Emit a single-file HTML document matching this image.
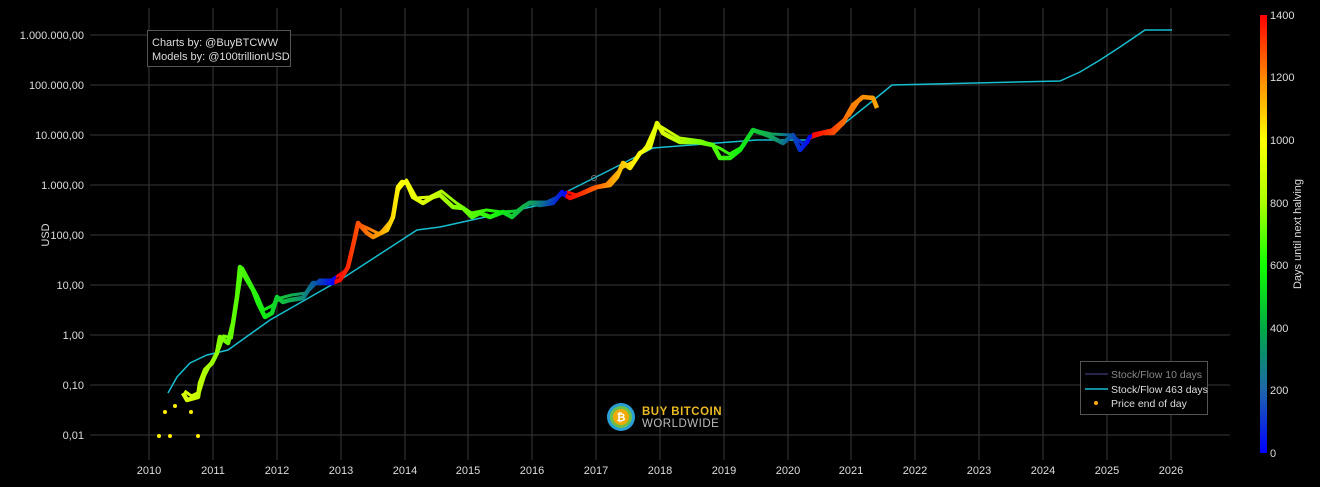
<!DOCTYPE html>
<html><head><meta charset="utf-8"><style>
html,body{margin:0;padding:0;background:#000;}
svg{display:block;font-family:"Liberation Sans",sans-serif;}
</style></head><body>
<svg width="1320" height="487" viewBox="0 0 1320 487" xmlns="http://www.w3.org/2000/svg">
<defs>
<linearGradient id="pg" gradientUnits="userSpaceOnUse" x1="0" y1="0" x2="1320" y2="0">
<stop offset="0.1205" stop-color="#ffff00"/>
<stop offset="0.147" stop-color="#ccff00"/>
<stop offset="0.1735" stop-color="#66ff00"/>
<stop offset="0.2" stop-color="#11ee11"/>
<stop offset="0.2265" stop-color="#119966"/>
<stop offset="0.253" stop-color="#0000ff"/>
<stop offset="0.2538" stop-color="#ff0000"/>
<stop offset="0.2788" stop-color="#ff7700"/>
<stop offset="0.303" stop-color="#ffff00"/>
<stop offset="0.328" stop-color="#ccff00"/>
<stop offset="0.353" stop-color="#66ff00"/>
<stop offset="0.378" stop-color="#11ee11"/>
<stop offset="0.403" stop-color="#119966"/>
<stop offset="0.428" stop-color="#0000ff"/>
<stop offset="0.4288" stop-color="#ff0000"/>
<stop offset="0.455" stop-color="#ff7700"/>
<stop offset="0.482" stop-color="#ffff00"/>
<stop offset="0.5076" stop-color="#ccff00"/>
<stop offset="0.534" stop-color="#66ff00"/>
<stop offset="0.5606" stop-color="#11ee11"/>
<stop offset="0.587" stop-color="#119966"/>
<stop offset="0.6136" stop-color="#0000ff"/>
<stop offset="0.6144" stop-color="#ff0000"/>
<stop offset="0.6417" stop-color="#ff7700"/>
<stop offset="0.668" stop-color="#ffaa00"/>
</linearGradient>
<linearGradient id="cb" x1="0" y1="1" x2="0" y2="0">
<stop offset="0" stop-color="#0000ff"/>
<stop offset="0.143" stop-color="#1e66aa"/>
<stop offset="0.286" stop-color="#00aa44"/>
<stop offset="0.43" stop-color="#11ff00"/>
<stop offset="0.57" stop-color="#aaff00"/>
<stop offset="0.714" stop-color="#ffff00"/>
<stop offset="0.857" stop-color="#ff8800"/>
<stop offset="1" stop-color="#ff0000"/>
</linearGradient>
</defs>
<g stroke="#383838" stroke-width="1">
<line x1="149" y1="8" x2="149" y2="460"/><line x1="213" y1="8" x2="213" y2="460"/><line x1="277" y1="8" x2="277" y2="460"/><line x1="341" y1="8" x2="341" y2="460"/><line x1="405" y1="8" x2="405" y2="460"/><line x1="468" y1="8" x2="468" y2="460"/><line x1="532" y1="8" x2="532" y2="460"/><line x1="596" y1="8" x2="596" y2="460"/><line x1="660" y1="8" x2="660" y2="460"/><line x1="724" y1="8" x2="724" y2="460"/><line x1="788" y1="8" x2="788" y2="460"/><line x1="851" y1="8" x2="851" y2="460"/><line x1="915" y1="8" x2="915" y2="460"/><line x1="979" y1="8" x2="979" y2="460"/><line x1="1043" y1="8" x2="1043" y2="460"/><line x1="1107" y1="8" x2="1107" y2="460"/><line x1="1171" y1="8" x2="1171" y2="460"/>
<line x1="90" y1="35" x2="1230" y2="35"/><line x1="90" y1="85" x2="1230" y2="85"/><line x1="90" y1="135" x2="1230" y2="135"/><line x1="90" y1="185" x2="1230" y2="185"/><line x1="90" y1="235" x2="1230" y2="235"/><line x1="90" y1="285" x2="1230" y2="285"/><line x1="90" y1="335" x2="1230" y2="335"/><line x1="90" y1="385" x2="1230" y2="385"/><line x1="90" y1="435" x2="1230" y2="435"/>
</g>
<g fill="#ddd" font-size="11" text-anchor="end">
<text x="84" y="39">1.000.000,00</text><text x="84" y="89">100.000,00</text><text x="84" y="139">10.000,00</text><text x="84" y="189">1.000,00</text><text x="84" y="239">100,00</text><text x="84" y="289">10,00</text><text x="84" y="339">1,00</text><text x="84" y="389">0,10</text><text x="84" y="439">0,01</text>
</g>
<g fill="#ddd" font-size="11" text-anchor="middle">
<text x="149" y="474">2010</text><text x="213" y="474">2011</text><text x="277" y="474">2012</text><text x="341" y="474">2013</text><text x="405" y="474">2014</text><text x="468" y="474">2015</text><text x="532" y="474">2016</text><text x="596" y="474">2017</text><text x="660" y="474">2018</text><text x="724" y="474">2019</text><text x="788" y="474">2020</text><text x="851" y="474">2021</text><text x="915" y="474">2022</text><text x="979" y="474">2023</text><text x="1043" y="474">2024</text><text x="1107" y="474">2025</text><text x="1171" y="474">2026</text>
</g>
<text transform="translate(49,235) rotate(-90)" fill="#ddd" font-size="11" text-anchor="middle">USD</text>
<polyline fill="none" stroke="#17becf" stroke-width="1.5" points="168,393 177,377 190,363 207,355 228,350 263,325 270,320 340,280 417,230 440,227 540,205 590,180 610,170 653,148 717,143 757,140 807,140 840,127 870,103 892,85 1060,81 1080,72 1100,60 1120,47 1145,30 1172,30"/>
<polyline fill="none" stroke="url(#pg)" stroke-width="4.5" stroke-linejoin="round" points="183,393 187,400 198,397 200,383 205,370 212,363 217,353 220,337 228,343 233,323 237,297 240,267 247,280 253,290 258,303 265,317 272,313 277,297 283,302 290,300 303,298 313,283 323,283 332,283 340,280 348,267 355,237 358,223 367,233 373,237 387,230 393,217 398,187 402,182 407,183 413,197 423,203 433,197 440,195 453,207 463,208 472,217 480,213 490,217 503,212 512,217 523,207 530,203 540,205 553,203 562,192 565,195 570,198 583,193 597,187 610,185 617,177 623,163 630,168 640,153 650,147 657,123 663,133 670,137 680,142 697,142 713,145 720,158 730,158 740,150 753,130 767,135 783,143 793,135 800,150 807,142 810,137 823,133 833,133 843,123 853,105 863,97 873,98 877,108"/>
<polyline fill="none" stroke="url(#pg)" stroke-width="3" stroke-linejoin="round" transform="translate(1.5,-2)" points="183,393 190,398 198,394 203,378 210,364 218,350 222,338 230,340 236,300 241,270 249,285 256,298 262,312 270,308 279,300 290,297 305,295 318,282 330,282 345,272 352,245 357,226 366,230 378,236 390,222 397,192 405,182 415,200 428,199 440,193 455,205 470,215 485,212 500,214 515,213 528,204 545,204 558,198 566,194 575,197 590,190 605,186 620,170 633,163 645,148 655,126 665,132 678,140 700,143 718,150 728,156 742,148 752,132 770,136 790,137 802,146 812,136 830,132 848,117 860,99 872,99"/>
<circle cx="594" cy="178" r="2.5" fill="none" stroke="#777" stroke-width="1"/>
<g fill="#ffee00">
<circle cx="159" cy="436" r="2"/><circle cx="170" cy="436" r="2"/><circle cx="198" cy="436" r="2"/><circle cx="165" cy="412" r="2"/><circle cx="175" cy="406" r="2"/><circle cx="191" cy="412" r="2"/>
</g>
<rect x="147.5" y="30.5" width="143" height="36" fill="#000" stroke="#555"/>
<text x="152" y="46" fill="#ddd" font-size="11">Charts by: @BuyBTCWW</text>
<text x="152" y="60" fill="#ddd" font-size="11">Models by: @100trillionUSD</text>
<circle cx="621" cy="417" r="14" fill="#2a9fd6"/>
<circle cx="621" cy="417" r="11" fill="#6cc04a"/>
<circle cx="621" cy="417" r="8" fill="#f2a900"/>
<text x="621" y="421" fill="#fff" font-size="11" font-weight="bold" text-anchor="middle">₿</text>
<text x="642" y="415" fill="#e8b923" font-size="11.5" font-weight="bold" letter-spacing="0.5">BUY BITCOIN</text>
<text x="642" y="427" fill="#bbb" font-size="11.5" letter-spacing="0.5">WORLDWIDE</text>
<rect x="1080.5" y="361.5" width="127" height="53" fill="#000" stroke="#555"/>
<line x1="1085" y1="374" x2="1108" y2="374" stroke="#336" stroke-width="1.5"/>
<line x1="1085" y1="389" x2="1108" y2="389" stroke="#17becf" stroke-width="1.5"/>
<circle cx="1096" cy="403" r="2" fill="#ffaa00"/>
<text x="1111" y="378" fill="#888" font-size="10.5">Stock/Flow 10 days</text>
<text x="1111" y="393" fill="#ddd" font-size="10.5">Stock/Flow 463 days</text>
<text x="1111" y="407" fill="#ddd" font-size="10.5">Price end of day</text>
<rect x="1260" y="15" width="7" height="438" fill="url(#cb)"/>
<g fill="#ddd" font-size="11">
<text x="1270" y="19">1400</text><text x="1270" y="81">1200</text><text x="1270" y="144">1000</text><text x="1270" y="207">800</text><text x="1270" y="269">600</text><text x="1270" y="332">400</text><text x="1270" y="394">200</text><text x="1270" y="457">0</text>
</g>
<text transform="translate(1301,234) rotate(-90)" fill="#ddd" font-size="11" text-anchor="middle">Days until next halving</text>
</svg>
</body></html>
